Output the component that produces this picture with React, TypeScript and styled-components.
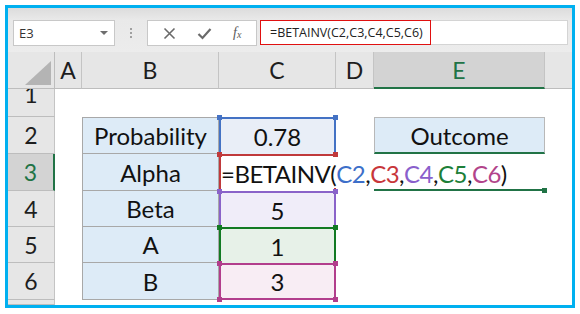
import styled, { createGlobalStyle, css } from "styled-components";

const GlobalStyle = createGlobalStyle`
  body {
    margin: 0;
    background: #ffffff;
    font-family: Lato, "Liberation Sans", sans-serif;
  }
`;

const Frame = styled.div`
  box-sizing: border-box;
  width: 570px;
  height: 303px;
  margin: 5px;
  border: 3px solid #00b0f0;
  display: flex;
  flex-direction: column;
  overflow: hidden;
`;

const Toolbar = styled.div`
  height: 44px;
  flex: none;
  display: flex;
  align-items: flex-start;
  padding: 12px 4px 0 5px;
  box-sizing: border-box;
  background: linear-gradient(#dcdcdc 0px, #e9e9e9 12px, #ececec 100%);
`;

const Box = styled.div<{ $w: number }>`
  box-sizing: border-box;
  width: ${(p) => p.$w}px;
  height: 26px;
  background: #ffffff;
  border: 1px solid #c8c8c8;
  display: flex;
  align-items: center;
`;

const NameBox = styled(Box)`
  justify-content: space-between;
  padding: 0 6px 0 5px;
  font-family: "Open Sans", sans-serif;
  font-size: 13px;
  color: #333;
`;

const DropArrow = styled.span`
  width: 0;
  height: 0;
  border-left: 4px solid transparent;
  border-right: 4px solid transparent;
  border-top: 4px solid #6e6e6e;
`;

const Dots = styled.div`
  width: 32px;
  height: 26px;
  display: flex;
  flex-direction: column;
  align-items: center;
  justify-content: center;
  gap: 2px;
  span {
    width: 2px;
    height: 2px;
    background: #a0a0a0;
  }
`;

const Controls = styled(Box)`
  justify-content: space-around;
  padding: 0 4px;
  color: #6a6a6a;
`;

const Fx = styled.span`
  font-family: "Liberation Serif", serif;
  font-style: italic;
  font-size: 14px;
  color: #5a5a5a;
  sub {
    font-size: 10px;
    vertical-align: -1px;
  }
`;

const FormulaBar = styled(Box)`
  margin-left: 3px;
  flex: 1;
  height: 25px;
  border-color: #d4d4d4;
`;

const FormulaText = styled.div`
  box-sizing: border-box;
  height: 25px;
  border: 1.5px solid #e01010;
  display: flex;
  align-items: center;
  padding: 0 7px 0 9px;
  margin-left: -1px;
  font-family: "Open Sans", sans-serif;
  font-size: 12.5px;
  color: #222;
`;

const Sheet = styled.div`
  flex: 1;
  display: grid;
  grid-template-columns: 47px 27px 137px 117px 38px 171px 27px;
  grid-template-rows: 37px 28px 37px 37px 36px 36px 37px 1fr;
  font-family: Lato, "Liberation Sans", sans-serif;
`;

const headBase = css`
  box-sizing: border-box;
  background: #e6e6e6;
  display: flex;
  align-items: center;
  justify-content: center;
  font-size: 23px;
  color: #1e1e1e;
  overflow: hidden;
`;

const Corner = styled.div`
  ${headBase};
  border-right: 1px solid #bdbdbd;
  border-bottom: 1px solid #bdbdbd;
  align-items: flex-end;
  justify-content: flex-end;
  padding: 0 3px 3px 0;
`;

const SelectAll = styled.span`
  width: 0;
  height: 0;
  border-left: 26px solid transparent;
  border-bottom: 24px solid #b4b4b4;
`;

const ColHead = styled.div<{ $active?: boolean; $last?: boolean }>`
  ${headBase};
  border-right: ${(p) => (p.$last ? "none" : "1px solid #c4c4c4")};
  border-bottom: 1px solid #bdbdbd;
  ${(p) =>
    p.$active &&
    css`
      background: #d3d3d3;
      color: #217346;
      border-bottom: 2px solid #217346;
    `}
`;

const RowHead = styled.div<{ $active?: boolean; $cut?: boolean }>`
  ${headBase};
  border-right: 1px solid #c4c4c4;
  border-bottom: 1px solid #bdbdbd;
  ${(p) =>
    p.$cut &&
    css`
      align-items: flex-start;
      span {
        margin-top: -9px;
      }
    `}
  ${(p) =>
    p.$active &&
    css`
      background: #d3d3d3;
      color: #217346;
      border-right: 2px solid #217346;
    `}
`;

const Blank = styled.div`
  background: #ffffff;
`;

const LabelCell = styled.div<{ $first?: boolean }>`
  box-sizing: border-box;
  background: #ddebf7;
  border: 1px solid #a8a8a8;
  border-top: ${(p) => (p.$first ? "1px solid #a8a8a8" : "none")};
  display: flex;
  align-items: center;
  justify-content: center;
  font-size: 24px;
  color: #111;
`;

const RefCell = styled.div<{ $color: string; $bg: string; $last?: boolean }>`
  position: relative;
  box-sizing: border-box;
  background: ${(p) => p.$bg};
  border: 2px solid ${(p) => p.$color};
  border-bottom: ${(p) => (p.$last ? `2px solid ${p.$color}` : "none")};
  display: flex;
  align-items: center;
  justify-content: center;
  font-size: 24px;
  color: #111;
`;

const Handle = styled.span<{ $color: string; $right?: boolean; $bottom?: boolean }>`
  position: absolute;
  width: 5px;
  height: 5px;
  background: ${(p) => p.$color};
  ${(p) => (p.$right ? "right: -4px;" : "left: -4px;")}
  ${(p) => (p.$bottom ? "bottom: -4px;" : "top: -4px;")}
  z-index: 3;
`;

const Formula = styled.span`
  position: absolute;
  left: 0;
  top: 0;
  bottom: 3px;
  display: flex;
  align-items: center;
  padding: 3px 4px 0 0;
  background: #ffffff;
  white-space: nowrap;
  font-size: 24px;
  letter-spacing: -0.5px;
  color: #111;
  z-index: 2;
`;

const Ref = styled.span<{ $color: string }>`
  color: ${(p) => p.$color};
`;

const Outcome = styled.div`
  box-sizing: border-box;
  background: #ddebf7;
  border: 1px solid #b8b8b8;
  border-bottom: 2px solid #217346;
  display: flex;
  align-items: center;
  justify-content: center;
  font-size: 24px;
  color: #111;
`;

const ActiveCell = styled.div`
  position: relative;
  box-sizing: border-box;
  border-bottom: 2px solid #217346;
  margin-right: 2px;
`;

const refs = [
  { label: "Probability", value: "0.78", color: "#4472c4", bg: "#e9eef7" },
  { label: "Alpha", value: "", color: "#c0393b", bg: "#ffffff" },
  { label: "Beta", value: "5", color: "#8a63c9", bg: "#f0edf9" },
  { label: "A", value: "1", color: "#127a23", bg: "#e7f1e8" },
  { label: "B", value: "3", color: "#b23e8c", bg: "#f8edf4" },
];

const formulaRefs = [
  { text: "C2", color: "#3d6fc9" },
  { text: "C3", color: "#c8363a" },
  { text: "C4", color: "#8a5fcc" },
  { text: "C5", color: "#1d7f38" },
  { text: "C6", color: "#b2448a" },
];

const XIcon = () => (
  <svg width="13" height="13" viewBox="0 0 13 13">
    <path d="M1.5 1.5 L11.5 11.5 M11.5 1.5 L1.5 11.5" stroke="#6a6a6a" strokeWidth="1.6" />
  </svg>
);

const CheckIcon = () => (
  <svg width="15" height="13" viewBox="0 0 15 13">
    <path d="M1.5 7 L5.5 11 L13.5 2" stroke="#6a6a6a" strokeWidth="2.2" fill="none" />
  </svg>
);

export default function App() {
  return (
    <>
      <GlobalStyle />
      <Frame>
        <Toolbar>
          <NameBox $w={102}>
            E3
            <DropArrow />
          </NameBox>
          <Dots>
            <span />
            <span />
            <span />
          </Dots>
          <Controls $w={110}>
            <XIcon />
            <CheckIcon />
            <Fx>
              f<sub>x</sub>
            </Fx>
          </Controls>
          <FormulaBar $w={308}>
            <FormulaText>=BETAINV(C2,C3,C4,C5,C6)</FormulaText>
          </FormulaBar>
        </Toolbar>
        <Sheet>
          <Corner>
            <SelectAll />
          </Corner>
          <ColHead>A</ColHead>
          <ColHead>B</ColHead>
          <ColHead>C</ColHead>
          <ColHead>D</ColHead>
          <ColHead $active>E</ColHead>
          <ColHead $last />

          <RowHead $cut>
            <span>1</span>
          </RowHead>
          <Blank />
          <Blank />
          <Blank />
          <Blank />
          <Blank />
          <Blank />

          {refs.map((r, i) => (
            <Row key={r.label} index={i} data={r} />
          ))}

          <RowHead />
          <Blank />
          <Blank />
          <Blank />
          <Blank />
          <Blank />
          <Blank />
        </Sheet>
      </Frame>
    </>
  );
}

function Row({ index, data }: { index: number; data: (typeof refs)[number] }) {
  const last = index === refs.length - 1;
  return (
    <>
      <RowHead $active={index === 1}>{index + 2}</RowHead>
      <Blank />
      <LabelCell $first={index === 0}>{data.label}</LabelCell>
      <RefCell $color={data.color} $bg={data.bg} $last={last}>
        <Handle $color={data.color} />
        <Handle $color={data.color} $right />
        {last && <Handle $color={data.color} $bottom />}
        {last && <Handle $color={data.color} $right $bottom />}
        {index === 1 ? (
          <Formula>
            =BETAINV(
            {formulaRefs.map((f, k) => (
              <span key={f.text}>
                <Ref $color={f.color}>{f.text}</Ref>
                {k < formulaRefs.length - 1 ? "," : ""}
              </span>
            ))}
            )
          </Formula>
        ) : (
          data.value
        )}
      </RefCell>
      <Blank />
      {index === 0 ? (
        <Outcome>Outcome</Outcome>
      ) : index === 1 ? (
        <ActiveCell>
          <Handle $color="#217346" $right $bottom />
        </ActiveCell>
      ) : (
        <Blank />
      )}
      <Blank />
    </>
  );
}
